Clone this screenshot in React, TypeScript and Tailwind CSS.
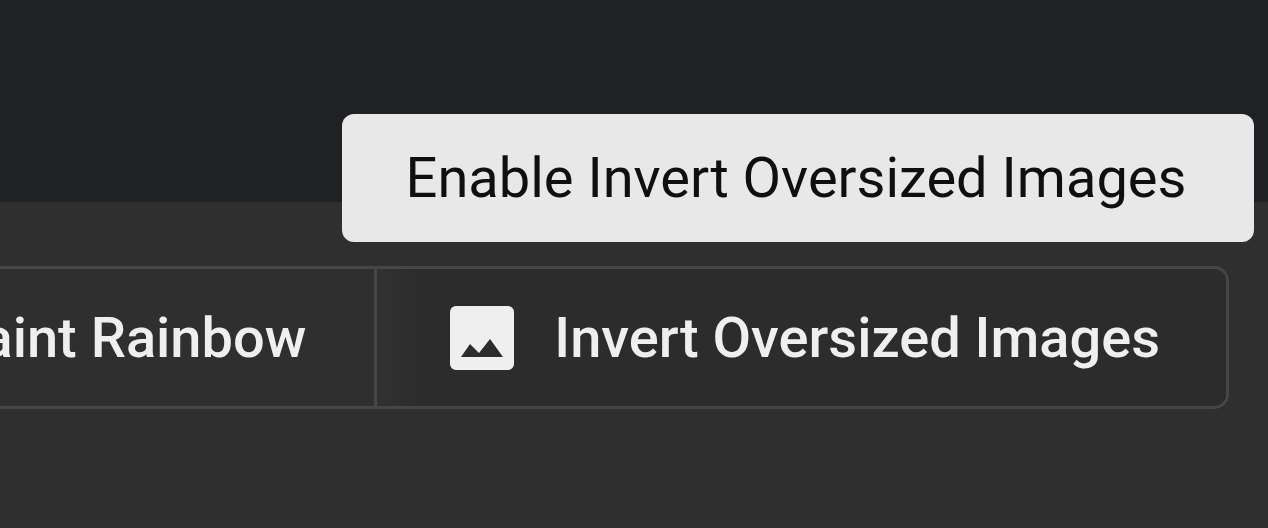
function ImageIcon() {
  return (
    <svg width="64" height="64" viewBox="0 0 64 64" className="shrink-0">
      <path
        fillRule="evenodd"
        fill="#efefef"
        d="M6 0H58A6 6 0 0 1 64 6V58A6 6 0 0 1 58 64H6A6 6 0 0 1 0 58V6A6 6 0 0 1 6 0ZM11 51H53L40 33L29 47L20 38Z"
      />
    </svg>
  )
}

export default function App() {
  return (
    <div className="relative h-[528px] w-[1268px] overflow-hidden bg-[#2f2f2f] font-['Roboto',sans-serif]">
      <div className="h-[202px] bg-[#202124]" />

      <div className="mt-[64px] flex justify-end pr-[39px]">
        <div className="flex h-[143px] shrink-0 rounded-[15px] border-[3px] border-[#464646]">
          <button className="flex items-center whitespace-nowrap border-r-[3px] border-[#464646] pl-[40px] pr-[68px] text-[56px] font-medium text-[#efefef]">
            Paint Rainbow
          </button>
          <button className="flex items-center gap-[40px] whitespace-nowrap rounded-r-[12px] bg-linear-to-r from-[#313131] to-[#2c2c2c] to-[5%] pl-[73px] pr-[66px] text-[56px] font-medium text-[#efefef]">
            <ImageIcon />
            Invert Oversized Images
          </button>
        </div>
      </div>

      <div className="absolute left-[342px] top-[114px] flex h-[128px] w-[912px] items-center justify-center rounded-[12px] bg-[#e8e8e8] pr-[4px] text-[56px] text-[#0f0f0f]">
        Enable Invert Oversized Images
      </div>
    </div>
  )
}
